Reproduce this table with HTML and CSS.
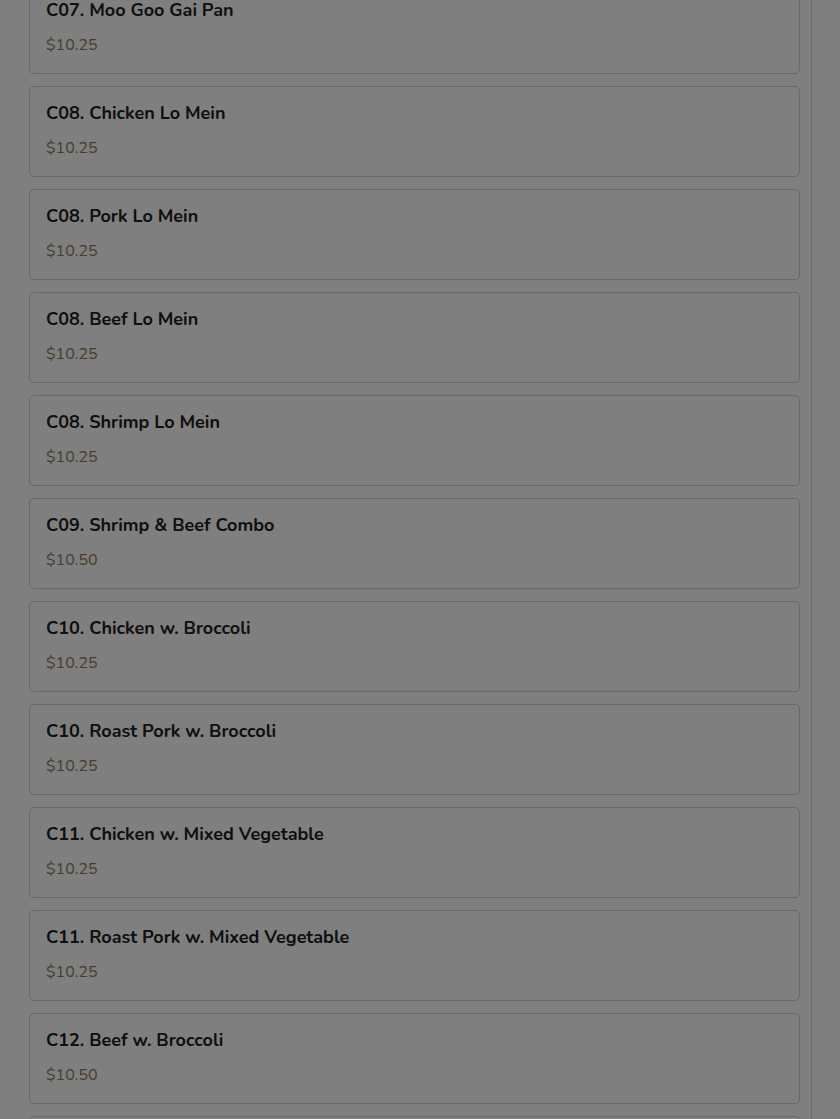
FILE: index.html
```html
<!DOCTYPE html>
<html>
<head>
<meta charset="utf-8">
<link rel="stylesheet" href="styles.css">
</head>
<body>
<div class="page">
  <div class="list">
    <div class="card"><div class="name">C07. Moo Goo Gai Pan</div><div class="price">$10.25</div></div>
    <div class="card"><div class="name">C08. Chicken Lo Mein</div><div class="price">$10.25</div></div>
    <div class="card"><div class="name">C08. Pork Lo Mein</div><div class="price">$10.25</div></div>
    <div class="card"><div class="name">C08. Beef Lo Mein</div><div class="price">$10.25</div></div>
    <div class="card"><div class="name">C08. Shrimp Lo Mein</div><div class="price">$10.25</div></div>
    <div class="card"><div class="name">C09. Shrimp &amp; Beef Combo</div><div class="price">$10.50</div></div>
    <div class="card"><div class="name">C10. Chicken w. Broccoli</div><div class="price">$10.25</div></div>
    <div class="card"><div class="name">C10. Roast Pork w. Broccoli</div><div class="price">$10.25</div></div>
    <div class="card"><div class="name">C11. Chicken w. Mixed Vegetable</div><div class="price">$10.25</div></div>
    <div class="card"><div class="name">C11. Roast Pork w. Mixed Vegetable</div><div class="price">$10.25</div></div>
    <div class="card"><div class="name">C12. Beef w. Broccoli</div><div class="price">$10.50</div></div>
    <div class="card card-peek"></div>
  </div>
</div>
<div class="overlay"></div>
</body>
</html>
```
FILE: styles.css
```css
html, body {
  margin: 0;
  padding: 0;
  background: #ffffff;
  overflow: hidden;
  height: 1119px;
}
body {
  font-family: "Nunito", Lato, "Noto Sans", sans-serif;
}
.page {
  width: 812px;
  border-right: 1px solid #d4d4d4;
  box-sizing: border-box;
  height: 1119px;
  overflow: hidden;
  padding: 0 11px 0 29px;
}
.list {
  display: flex;
  flex-direction: column;
  gap: 12px;
  margin-top: -17px;
}
.card {
  border: 1px solid #d0d0d0;
  border-radius: 5px;
  background: #ffffff;
  padding: 15px 16px 17px 16px;
  height: 91px;
  box-sizing: border-box;
  flex-shrink: 0;
}
.name {
  font-size: 18px;
  font-weight: 700;
  line-height: 22px;
  color: #202020;
}
.price {
  margin-top: 13px;
  font-size: 16px;
  line-height: 22px;
  color: #8e7a58;
}
.overlay {
  position: fixed;
  inset: 0;
  background: rgba(0, 0, 0, 0.5);
}
```
